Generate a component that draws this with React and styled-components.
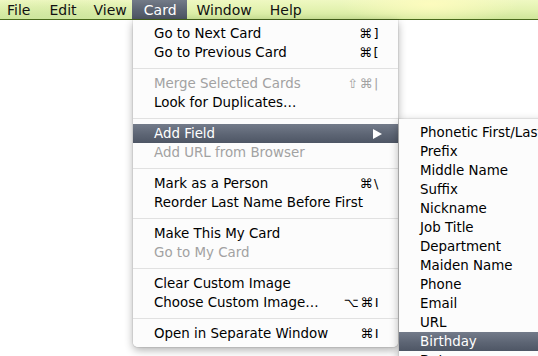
import React from "react";
import styled, { createGlobalStyle } from "styled-components";

const Global = createGlobalStyle`
  html, body { margin: 0; padding: 0; background: #fff; }
  body { width: 538px; height: 356px; overflow: hidden; font-family: "DejaVu Sans", "Liberation Sans", sans-serif; }
`;

const Screen = styled.div`
  position: relative;
  width: 538px;
  height: 356px;
  overflow: hidden;
  background: #fff;
`;

const MenuBar = styled.div`
  display: flex;
  align-items: stretch;
  height: 19px;
  border-bottom: 1px solid #4a6a1c;
  background:
    radial-gradient(ellipse 90px 22px at 430px 4px, rgba(255, 252, 190, 0.9), rgba(255, 252, 190, 0) 100%),
    radial-gradient(ellipse 120px 20px at 60px 18px, rgba(205, 230, 160, 0.8), rgba(205, 230, 160, 0) 100%),
    linear-gradient(to bottom, #eff8c2 0%, #e3f2b0 50%, #cfe69a 100%);
`;

const BarItem = styled.div`
  display: flex;
  align-items: center;
  padding: 0 ${(p) => p.$r}px 0 ${(p) => p.$l}px;
  font-size: 14px;
  color: ${(p) => (p.$active ? "#fff" : "#111")};
  background: ${(p) =>
    p.$active ? "linear-gradient(to bottom, #737b88 0%, #5b6371 55%, #4d5563 100%)" : "none"};
`;

const Menu = styled.div`
  position: absolute;
  left: ${(p) => p.$left}px;
  top: ${(p) => p.$top}px;
  width: ${(p) => p.$width}px;
  padding: 4px 0;
  background: rgba(252, 252, 252, 0.97);
  border-radius: ${(p) => (p.$sub ? "0" : "0 0 5px 5px")};
  box-shadow: 0 3px 9px rgba(0, 0, 0, 0.32), 0 0 0 1px rgba(0, 0, 0, 0.06);
`;

const Row = styled.div`
  display: flex;
  align-items: center;
  height: 19px;
  padding: 0 18px 0 21px;
  font-size: 13.4px;
  white-space: nowrap;
  color: ${(p) => (p.$hi ? "#fff" : p.$off ? "#a2a2a2" : "#000")};
  background: ${(p) =>
    p.$hi ? "linear-gradient(to bottom, #737b8a 0%, #5d6574 55%, #4e5665 100%)" : "none"};
`;

const Label = styled.span`
  flex: 1;
`;

const Keys = styled.span`
  font-size: 13px;
  letter-spacing: 1.5px;
  color: inherit;
`;

const Arrow = styled.span`
  width: 0;
  height: 0;
  border-top: 5px solid transparent;
  border-bottom: 5px solid transparent;
  border-left: 9px solid #fff;
  margin-right: -2px;
`;

const Sep = styled.div`
  height: 12px;
  display: flex;
  align-items: center;
  &::after {
    content: "";
    flex: 1;
    height: 1px;
    background: #e1e1e1;
  }
`;

const cardMenu = [
  ["Go to Next Card", "⌘]"],
  ["Go to Previous Card", "⌘["],
  "-",
  ["Merge Selected Cards", "⇧⌘|", "off"],
  ["Look for Duplicates…"],
  "-",
  ["Add Field", "arrow", "hi"],
  ["Add URL from Browser", null, "off"],
  "-",
  ["Mark as a Person", "⌘\\"],
  ["Reorder Last Name Before First"],
  "-",
  ["Make This My Card"],
  ["Go to My Card", null, "off"],
  "-",
  ["Clear Custom Image"],
  ["Choose Custom Image…", "⌥⌘I"],
  "-",
  ["Open in Separate Window", "⌘I"],
];

const fields = [
  "Phonetic First/Last Name",
  "Prefix",
  "Middle Name",
  "Suffix",
  "Nickname",
  "Job Title",
  "Department",
  "Maiden Name",
  "Phone",
  "Email",
  "URL",
  "Birthday",
  "Date",
];

export default function App() {
  return (
    <Screen>
      <Global />
      <MenuBar>
        <BarItem $l={7} $r={10}>File</BarItem>
        <BarItem $l={9} $r={8}>Edit</BarItem>
        <BarItem $l={9} $r={5}>View</BarItem>
        <BarItem $active $l={12} $r={10}>Card</BarItem>
        <BarItem $l={10} $r={9}>Window</BarItem>
        <BarItem $l={9} $r={9}>Help</BarItem>
      </MenuBar>

      <Menu $left={133} $top={20} $width={265}>
        {cardMenu.map((item, i) =>
          item === "-" ? (
            <Sep key={i} />
          ) : (
            <Row key={i} $hi={item[2] === "hi"} $off={item[2] === "off"}>
              <Label>{item[0]}</Label>
              {item[1] === "arrow" ? <Arrow /> : item[1] ? <Keys>{item[1]}</Keys> : null}
            </Row>
          )
        )}
      </Menu>

      <Menu $sub $left={399} $top={119} $width={180}>
        {fields.map((f) => (
          <Row key={f} $hi={f === "Birthday"}>
            <Label>{f}</Label>
          </Row>
        ))}
      </Menu>
    </Screen>
  );
}
